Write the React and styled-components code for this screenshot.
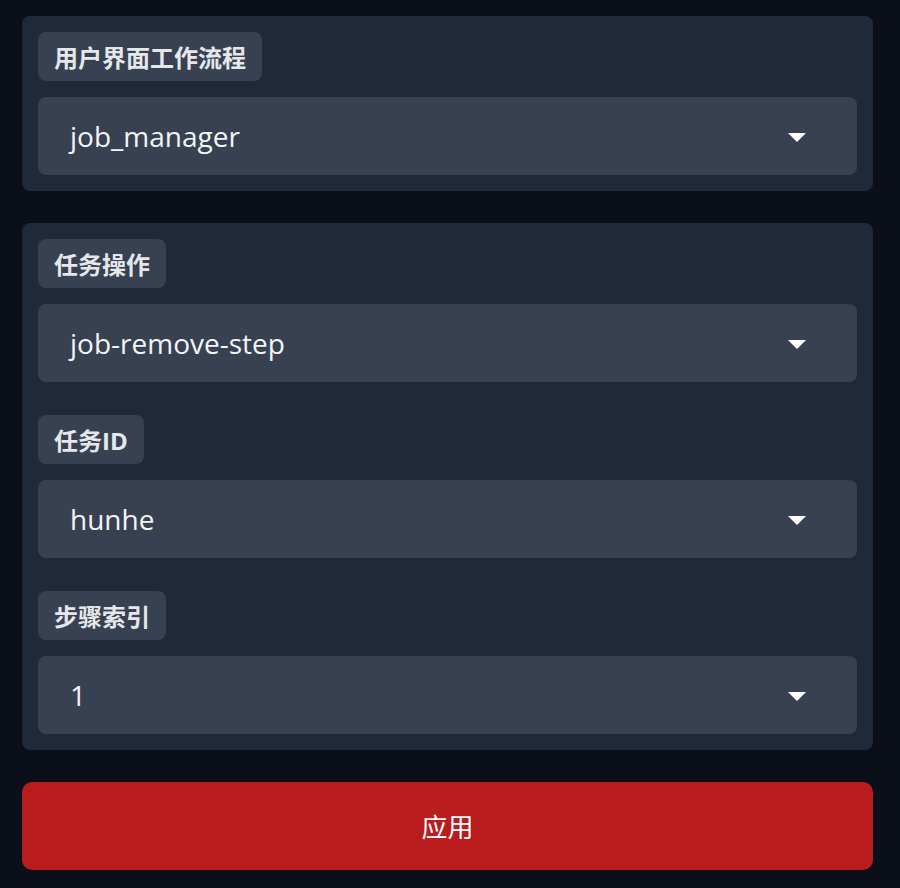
import React, { useState } from "react";
import styled, { createGlobalStyle } from "styled-components";

const GlobalStyle = createGlobalStyle`
  html, body {
    margin: 0;
    padding: 0;
    background: #0b0f19;
  }
  body {
    font-family: "Open Sans", "Noto Sans CJK SC", sans-serif;
  }
`;

const Page = styled.main`
  display: flex;
  flex-direction: column;
  gap: 32px;
  padding: 16px 27px 18px 22px;
  min-height: 888px;
  box-sizing: border-box;
  background: #0b0f19;
`;

const Panel = styled.section`
  display: flex;
  flex-direction: column;
  gap: 33px;
  padding: 16px;
  background: #1f2937;
  border-radius: 8px;
`;

const Field = styled.div`
  display: flex;
  flex-direction: column;
  align-items: flex-start;
  gap: 16px;
`;

const Label = styled.span`
  display: inline-flex;
  align-items: center;
  height: 49px;
  padding: 0 16px;
  box-sizing: border-box;
  background: #374151;
  border-radius: 8px;
  color: #e5e7eb;
  font-family: "Open Sans", "Noto Sans CJK SC", sans-serif;
  font-size: 24px;
  font-weight: 700;
`;

const Select = styled.div`
  display: flex;
  align-items: center;
  justify-content: space-between;
  align-self: stretch;
  height: 78px;
  padding: 0 51px 0 32px;
  box-sizing: border-box;
  background: #374151;
  border-radius: 8px;
  color: #f3f4f6;
  font-size: 28px;
  cursor: pointer;
`;

const Arrow = styled.span`
  width: 0;
  height: 0;
  border-left: 9px solid transparent;
  border-right: 9px solid transparent;
  border-top: 9px solid #ffffff;
  margin-top: 2px;
`;

const ApplyButton = styled.button`
  height: 88px;
  border: none;
  border-radius: 10px;
  background: #b91c1c;
  color: #ffffff;
  font-family: "Open Sans", "Noto Sans CJK SC", sans-serif;
  font-size: 26px;
  cursor: pointer;
`;

const Dropdown = ({ label, value }) => (
  <Field>
    <Label>{label}</Label>
    <Select>
      <span>{value}</span>
      <Arrow />
    </Select>
  </Field>
);

const App = () => {
  const [fields] = useState([
    { label: "任务操作", value: "job-remove-step" },
    { label: "任务ID", value: "hunhe" },
    { label: "步骤索引", value: "1" },
  ]);

  return (
    <>
      <GlobalStyle />
      <Page>
        <Panel>
          <Dropdown label="用户界面工作流程" value="job_manager" />
        </Panel>
        <Panel>
          {fields.map((f) => (
            <Dropdown key={f.label} label={f.label} value={f.value} />
          ))}
        </Panel>
        <ApplyButton>应用</ApplyButton>
      </Page>
    </>
  );
};

export default App;
